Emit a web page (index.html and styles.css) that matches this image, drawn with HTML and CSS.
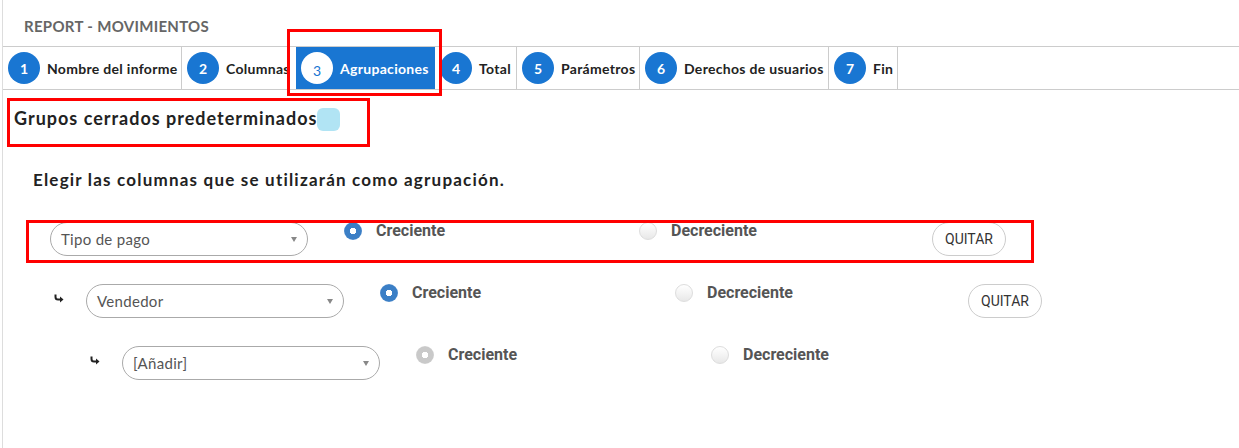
FILE: index.html
```html
<!DOCTYPE html>
<html lang="es">
<head>
  <meta charset="UTF-8">
  <title>Report - Movimientos</title>
  <link rel="stylesheet" href="styles.css">
</head>
<body>
  <div class="pagina">
    <div class="cabecera">REPORT - MOVIMIENTOS</div>

    <div class="pasos">
      <div class="paso paso-1"><span class="num">1</span>Nombre del informe</div>
      <div class="paso paso-2"><span class="num">2</span>Columnas</div>
      <div class="paso paso-3 activo"><span class="num">3</span>Agrupaciones</div>
      <div class="paso paso-4"><span class="num">4</span>Total</div>
      <div class="paso paso-5"><span class="num">5</span>Parámetros</div>
      <div class="paso paso-6"><span class="num">6</span>Derechos de usuarios</div>
      <div class="paso paso-7"><span class="num">7</span>Fin</div>
    </div>

    <div class="contenido">
      <h2 class="titulo">Grupos cerrados predeterminados<span class="ayuda"></span></h2>
      <p class="intro">Elegir las columnas que se utilizarán como agrupación.</p>

      <div class="grupos">
        <div class="fila">
          <div class="selector">Tipo de pago</div>
          <label class="opcion opcion-crec"><span class="radio marcado"></span>Creciente</label>
          <label class="opcion opcion-decr"><span class="radio"></span>Decreciente</label>
          <button class="quitar">QUITAR</button>
        </div>

        <div class="fila nivel-1">
          <span class="flecha"><svg width="10" height="9" viewBox="0 0 10 9"><path d="M1.5 0.5 V3 Q1.5 5.5 4 5.5 H6.5" fill="none" stroke="#222" stroke-width="2"/><path d="M6 2.5 L9.5 5.5 L6 8.5 Z" fill="#222"/></svg></span>
          <div class="selector">Vendedor</div>
          <label class="opcion opcion-crec"><span class="radio marcado"></span>Creciente</label>
          <label class="opcion opcion-decr"><span class="radio"></span>Decreciente</label>
          <button class="quitar">QUITAR</button>
        </div>

        <div class="fila nivel-2">
          <span class="flecha"><svg width="10" height="9" viewBox="0 0 10 9"><path d="M1.5 0.5 V3 Q1.5 5.5 4 5.5 H6.5" fill="none" stroke="#222" stroke-width="2"/><path d="M6 2.5 L9.5 5.5 L6 8.5 Z" fill="#222"/></svg></span>
          <div class="selector">[Añadir]</div>
          <label class="opcion opcion-crec"><span class="radio inactivo"></span>Creciente</label>
          <label class="opcion opcion-decr"><span class="radio"></span>Decreciente</label>
        </div>
      </div>
    </div>

    <!-- marcas rojas de la captura -->
    <div class="marca marca-pasos"></div>
    <div class="marca marca-titulo"></div>
    <div class="marca marca-fila"></div>
  </div>
</body>
</html>
```

FILE: styles.css
```css
body {
  margin: 0;
  background: #fff;
  font-family: Lato, "Open Sans", sans-serif;
  color: #222;
}
.pagina {
  position: relative;
  margin-left: 2px;
  border-left: 1px solid #ddd;
  height: 448px;
  box-sizing: border-box;
}
.cabecera {
  height: 46px;
  box-sizing: border-box;
  padding: 17px 0 0 21px;
  font-size: 15px;
  font-weight: 700;
  color: #666;
  letter-spacing: 0.3px;
}
.pasos {
  display: flex;
  border-top: 1px solid #ccc;
  border-bottom: 1px solid #ccc;
  height: 42px;
}
.paso {
  display: flex;
  align-items: center;
  box-sizing: border-box;
  padding-left: 5px;
  border-right: 1px solid #ccc;
  font-size: 14px;
  font-weight: 700;
  color: #222;
  letter-spacing: 0.3px;
  white-space: nowrap;
}
.paso-1 { width: 179px; }
.paso-2 { width: 114px; border-right: none; }
.paso-3 { width: 139px; }
.paso-4 { width: 82px; }
.paso-5 { width: 123px; }
.paso-6 { width: 189px; }
.paso-7 { width: 69px; }
.num {
  display: flex;
  align-items: center;
  justify-content: center;
  width: 32px;
  height: 32px;
  margin-right: 7px;
  border-radius: 50%;
  background: #1976d2;
  color: #fff;
  font-size: 14px;
  font-weight: 700;
  letter-spacing: 0;
  flex-shrink: 0;
}
.activo {
  background: #1976d2;
  color: #fff;
  border-right: none;
}
.activo .num {
  background: #fff;
  color: #1976d2;
  font-weight: 400;
  padding-top: 4px;
  box-sizing: border-box;
}
.contenido {
  padding-left: 11px;
}
.titulo {
  display: flex;
  align-items: center;
  margin: 14px 0 0;
  font-size: 18px;
  font-weight: 700;
  line-height: 24px;
  letter-spacing: 1px;
  color: #222;
}
.ayuda {
  display: inline-block;
  width: 23px;
  height: 23px;
  margin-top: 4px;
  border-radius: 6px;
  background: #b1e4f4;
}
.intro {
  margin: 37px 0 0 19px;
  font-size: 17px;
  font-weight: 700;
  line-height: 24px;
  letter-spacing: 1.2px;
}
.grupos {
  display: flex;
  flex-direction: column;
  gap: 28px;
  margin: 30px 0 0 36px;
}
.fila {
  display: flex;
  align-items: flex-start;
  height: 34px;
}
.nivel-1 { padding-left: 4px; }
.nivel-2 { padding-left: 40px; }
.flecha {
  display: flex;
  width: 32px;
  padding-top: 10px;
  flex-shrink: 0;
}
.selector {
  position: relative;
  width: 258px;
  height: 34px;
  box-sizing: border-box;
  margin-right: 36px;
  padding: 0 10px;
  border: 1px solid #aaa;
  border-radius: 17px;
  font-size: 15px;
  font-weight: 400;
  letter-spacing: 0.3px;
  line-height: 32px;
  color: #555;
  flex-shrink: 0;
}
.selector::after {
  content: "";
  position: absolute;
  right: 10px;
  top: 14px;
  border-left: 3px solid transparent;
  border-right: 3px solid transparent;
  border-top: 5px solid #888;
}
.opcion {
  display: flex;
  align-items: flex-start;
  font-family: Roboto, "Liberation Sans", sans-serif;
  font-size: 16px;
  font-weight: 700;
  color: #555;
  line-height: 18px;
  flex-shrink: 0;
}
.opcion-crec { width: 295px; }
.opcion-decr { width: 293px; }
.radio {
  display: inline-block;
  width: 18px;
  height: 18px;
  box-sizing: border-box;
  margin-right: 14px;
  border-radius: 50%;
  border: 1px solid #ddd;
  background: linear-gradient(#fff, #e8e8e8);
}
.radio.marcado {
  border: none;
  background: radial-gradient(circle, #fff 0 3px, #3b7fc6 3.5px 8px, #5b93cf 9px);
}
.radio.inactivo {
  border: none;
  background: radial-gradient(circle, #fff 0 3px, #c9c9c9 3.5px 8px, #d4d4d4 9px);
}
.quitar {
  height: 34px;
  padding: 0 12px;
  border: 1px solid #ccc;
  border-radius: 17px;
  background: #fff;
  font-family: Roboto, "Liberation Sans", sans-serif;
  font-size: 14px;
  color: #333;
}
.marca {
  position: absolute;
  border: 3px solid #f00;
  box-sizing: border-box;
}
.marca-pasos { left: 284px; top: 29px; width: 155px; height: 67px; }
.marca-titulo { left: 4px; top: 98px; width: 363px; height: 49px; }
.marca-fila { left: 23px; top: 220px; width: 1008px; height: 43px; }
```
